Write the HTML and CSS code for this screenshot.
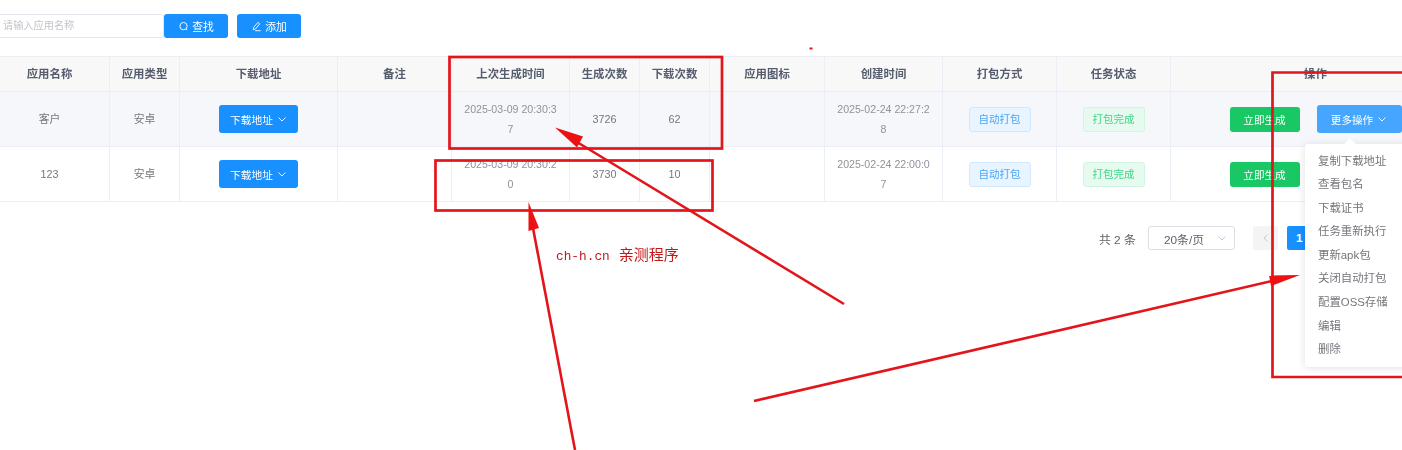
FILE: index.html
```html
<!DOCTYPE html>
<html lang="zh-CN">
<head>
<meta charset="utf-8">
<title>应用管理</title>
<link rel="stylesheet" href="styles.css">
</head>
<body>
<main class="page">
  <div class="content">
    <div class="toolbar">
      <div class="search-input">请输入应用名称</div>
      <button class="btn btn-blue btn-search">
        <svg class="ico" viewBox="0 0 12 12"><circle cx="6" cy="5.6" r="4" /><path d="M8.6 8.6l1.4 1.4" /></svg>查找
      </button>
      <button class="btn btn-blue btn-add">
        <svg class="ico" viewBox="0 0 12 12"><path d="M7.5 1.5l2 1.6-4.6 5.6-2.4.8.3-2.4zM4.5 10.6h6" /></svg>添加
      </button>
    </div>

    <div class="table">
      <div class="row head">
        <div class="cell">应用名称</div><div class="cell">应用类型</div><div class="cell">下载地址</div><div class="cell">备注</div>
        <div class="cell">上次生成时间</div><div class="cell">生成次数</div><div class="cell">下载次数</div><div class="cell">应用图标</div>
        <div class="cell">创建时间</div><div class="cell">打包方式</div><div class="cell">任务状态</div><div class="cell">操作</div>
      </div>
      <div class="row body hover">
        <div class="cell">客户</div><div class="cell">安卓</div>
        <div class="cell"><button class="btn btn-blue btn-dl">下载地址<svg class="chev" viewBox="0 0 10 10"><path d="M1.5 3.5L5 7l3.5-3.5" /></svg></button></div>
        <div class="cell"></div>
        <div class="cell date">2025-03-09 20:30:37</div><div class="cell">3726</div><div class="cell">62</div><div class="cell"></div>
        <div class="cell date">2025-02-24 22:27:28</div>
        <div class="cell"><span class="tag tag-blue">自动打包</span></div>
        <div class="cell"><span class="tag tag-green">打包完成</span></div>
        <div class="cell ops"><button class="btn btn-green">立即生成</button><button class="btn btn-light">更多操作<svg class="chev" viewBox="0 0 10 10"><path d="M1.5 3.5L5 7l3.5-3.5" /></svg></button></div>
      </div>
      <div class="row body">
        <div class="cell">123</div><div class="cell">安卓</div>
        <div class="cell"><button class="btn btn-blue btn-dl">下载地址<svg class="chev" viewBox="0 0 10 10"><path d="M1.5 3.5L5 7l3.5-3.5" /></svg></button></div>
        <div class="cell"></div>
        <div class="cell date">2025-03-09 20:30:20</div><div class="cell">3730</div><div class="cell">10</div><div class="cell"></div>
        <div class="cell date">2025-02-24 22:00:07</div>
        <div class="cell"><span class="tag tag-blue">自动打包</span></div>
        <div class="cell"><span class="tag tag-green">打包完成</span></div>
        <div class="cell ops"><button class="btn btn-green">立即生成</button><button class="btn btn-light">更多操作</button></div>
      </div>
    </div>

    <div class="pager">
      <span class="total">共 2 条</span>
      <div class="select">20条/页<svg class="chev" viewBox="0 0 10 10"><path d="M1.5 3.5L5 7l3.5-3.5" /></svg></div>
      <div class="page-prev"><svg class="chev" viewBox="0 0 10 10"><path d="M6.5 1.5L3 5l3.5 3.5" /></svg></div>
      <div class="page-num">1</div>
    </div>
  </div>

  <ul class="menu">
    <li>复制下载地址</li><li>查看包名</li><li>下载证书</li><li>任务重新执行</li><li>更新apk包</li><li>关闭自动打包</li><li>配置OSS存储</li><li>编辑</li><li>删除</li>
  </ul>

  <svg class="marks" viewBox="0 0 1402 450">
    <rect x="449.5" y="57" width="272.5" height="91.5" />
    <rect x="435.5" y="160.5" width="277" height="50" />
    <path d="M1405 72.5H1272.5V377H1405" />
    <path class="thin" d="M844 304L572 139" />
    <path class="thin" d="M575 450L533 228" />
    <path class="thin" d="M754 401L1272 281" />
    <path class="head-fill" d="M555 127.5L583 136.5L577 147.5Z" />
    <path class="head-fill" d="M528.5 202L539 228L528.5 231Z" />
    <path class="head-fill" d="M1300 275L1269 275.5L1271 286Z" />
    <rect class="head-fill" x="809.5" y="47.5" width="3" height="2" />
  </svg>
  <div class="watermark"><span class="wm-latin">ch-h.cn</span>亲测程序</div>
</main>
</body>
</html>
```
FILE: styles.css
```css
* { box-sizing: border-box; }
html, body { margin: 0; padding: 0; background: #fff; }
body { width: 1402px; height: 450px; overflow: hidden; font-family: "Liberation Sans", "Noto Sans CJK SC", sans-serif; }
.page { position: relative; width: 1402px; height: 450px; overflow: hidden; }
.content { filter: blur(0.4px); width: 1402px; overflow: hidden; }

.toolbar { display: flex; align-items: stretch; height: 24px; margin-top: 14px; }
.search-input { width: 164px; padding-left: 3px; border: 1px solid #e4e7ed; border-left: 0; border-radius: 0 3px 3px 0; font-size: 10.2px; line-height: 22px; color: #c0c4cc; }
.btn { border: 0; font-family: inherit; color: #fff; border-radius: 3px; padding: 0; display: inline-flex; align-items: center; justify-content: center; }
.btn-blue { background: #1890ff; }
.btn-search, .btn-add { width: 64px; font-size: 10.8px; gap: 3px; }
.btn-add { margin-left: 9px; }
.ico { width: 11px; height: 11px; fill: none; stroke: #fff; stroke-width: 1; }
.chev { width: 10px; height: 10px; fill: none; stroke: currentColor; stroke-width: 0.9; }

.table { margin: 18px 0 0 -10px; width: 1471px; }
.row { display: grid; grid-template-columns: 120px 70px 158px 114px 118px 70px 70px 115px 118px 114px 114px 290px; }
.head { height: 36px; background: #f8f8f9; border-top: 1px solid #ebeef5; }
.body { height: 55px; background: #fff; }
.hover { background: #f5f7fa; }
.cell { display: flex; align-items: center; justify-content: center; text-align: center; border-right: 1px solid #ebeef5; border-bottom: 1px solid #ebeef5; font-size: 10.8px; line-height: 20px; color: #74777c; padding: 0 10px; min-width: 0; }
.head .cell { font-size: 11.4px; font-weight: 700; color: #555c6b; }
.date { word-break: break-all; color: #909399; font-size: 10.6px; }

.btn-dl { width: 79px; height: 28px; font-size: 10.7px; gap: 4px; }
.tag { display: inline-block; width: 62px; height: 25px; line-height: 23px; font-size: 10.5px; border-radius: 3px; border: 1px solid; white-space: nowrap; }
.tag-blue { background: #e8f4ff; border-color: #d1e9ff; color: #4aa6f5; }
.tag-green { background: #e7faf0; border-color: #d0f5e0; color: #3fd585; }
.ops { gap: 17px; padding: 0; }
.btn-green { width: 70px; height: 25px; background: #19c865; font-size: 10.6px; }
.btn-light { width: 85px; height: 28px; background: #46a6ff; font-size: 10.6px; gap: 4px; }

.pager { display: flex; align-items: center; height: 24px; margin-top: 24px; padding-left: 1099px; font-size: 11.8px; color: #606266; }
.total { width: 49px; white-space: nowrap; }
.select { display: flex; align-items: center; justify-content: space-between; width: 87px; height: 24px; padding: 0 7px 0 15px; border: 1px solid #dcdfe6; border-radius: 3px; color: #606266; }
.select .chev { color: #c0c4cc; }
.page-prev { display: flex; align-items: center; justify-content: center; width: 25px; height: 24px; margin-left: 18px; background: #f4f4f5; border-radius: 2px; color: #c0c4cc; }
.page-num { width: 25px; height: 24px; margin-left: 9px; padding-left: 9px; background: #1890ff; border-radius: 2px; color: #fff; font-weight: 700; line-height: 24px; }

.menu { position: absolute; left: 1305px; top: 144px; width: 110px; height: 223px; margin: 0; padding: 5.5px 0 0 13px; list-style: none; background: #fff; border-radius: 3px; box-shadow: 0 1px 8px rgba(0,0,0,.12); font-size: 11.4px; line-height: 23.6px; color: #73767b; filter: blur(0.4px); }
.menu::before { content: ""; position: absolute; left: 41px; top: -4px; width: 8px; height: 8px; background: #fff; transform: rotate(45deg); }
.menu li { position: relative; }

.marks { position: absolute; left: 0; top: 0; width: 1402px; height: 450px; fill: none; stroke: #e3141a; stroke-width: 2.7; pointer-events: none; }
.marks .thin { stroke-width: 2.6; }
.marks .head-fill { fill: #ee1111; stroke: none; }
.watermark { position: absolute; left: 556px; top: 245px; font-family: "Noto Sans CJK SC", sans-serif; font-size: 15px; line-height: 18px; color: #c21818; white-space: nowrap; }
.wm-latin { font-family: "Liberation Mono", monospace; font-size: 12.8px; margin-right: 9px; }
```
